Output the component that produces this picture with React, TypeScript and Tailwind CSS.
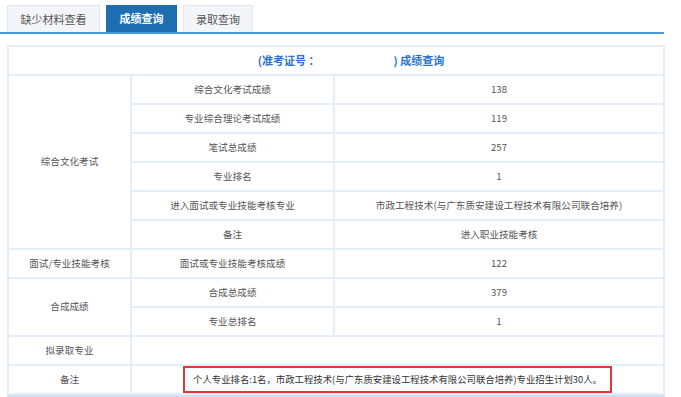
import React from "react";

const font = { fontFamily: '"Noto Sans CJK SC", "Liberation Sans", sans-serif' };

const tabs = ["缺少材料查看", "成绩查询", "录取查询"];

const Cell = ({
  children,
  rowSpan,
  colSpan,
}: {
  children?: React.ReactNode;
  rowSpan?: number;
  colSpan?: number;
}) => (
  <td
    rowSpan={rowSpan}
    colSpan={colSpan}
    className="border-2 border-[#e4eefa] text-center align-middle text-[9.6px] text-[#555] leading-none p-0"
  >
    {children}
  </td>
);

const App = () => {
  return (
    <div className="w-[681px] h-[397px] bg-white overflow-hidden" style={font}>
      {/* tabs */}
      <div className="flex items-end gap-[6px] pl-[7px] pt-[5px] w-[664px] border-b-2 border-[#4b9ad6]">
        {tabs.map((t, i) =>
          i === 1 ? (
            <div
              key={t}
              className="h-[27px] w-[71px] flex items-center justify-center bg-[#1e6fb1] text-white text-[11px] font-bold"
            >
              {t}
            </div>
          ) : (
            <div
              key={t}
              className={`h-[27px] ${i === 0 ? "w-[93px]" : "w-[70px]"} flex items-center justify-center bg-[#f3f5f8] border border-b-0 border-[#dfe7f0] text-[#555] text-[11px]`}
            >
              {t}
            </div>
          )
        )}
      </div>

      {/* score table */}
      <div className="mt-[11px] ml-[7px] w-[658px] border-b-[3px] border-[#cfe0f3]">
        <table className="w-full border-collapse table-fixed">
          <colgroup>
            <col className="w-[123px]" />
            <col className="w-[203px]" />
            <col />
          </colgroup>
          <tbody>
            <tr className="h-[29px]">
              <td
                colSpan={3}
                className="border-2 border-[#e4eefa] text-center text-[11px] font-bold text-[#2a72d0] p-0"
              >
                <span className="pl-[30px]">(准考证号 ：</span>
                <span className="inline-block w-[74px]" />
                <span>) 成绩查询</span>
              </td>
            </tr>
            <tr className="h-[29px]">
              <Cell rowSpan={6}>综合文化考试</Cell>
              <Cell>综合文化考试成绩</Cell>
              <Cell>138</Cell>
            </tr>
            <tr className="h-[29px]">
              <Cell>专业综合理论考试成绩</Cell>
              <Cell>119</Cell>
            </tr>
            <tr className="h-[29px]">
              <Cell>笔试总成绩</Cell>
              <Cell>257</Cell>
            </tr>
            <tr className="h-[29px]">
              <Cell>专业排名</Cell>
              <Cell>1</Cell>
            </tr>
            <tr className="h-[29px]">
              <Cell>进入面试或专业技能考核专业</Cell>
              <Cell>市政工程技术(与广东质安建设工程技术有限公司联合培养)</Cell>
            </tr>
            <tr className="h-[29px]">
              <Cell>备注</Cell>
              <Cell>进入职业技能考核</Cell>
            </tr>
            <tr className="h-[29px]">
              <Cell>面试/专业技能考核</Cell>
              <Cell>面试或专业技能考核成绩</Cell>
              <Cell>122</Cell>
            </tr>
            <tr className="h-[29px]">
              <Cell rowSpan={2}>合成成绩</Cell>
              <Cell>合成总成绩</Cell>
              <Cell>379</Cell>
            </tr>
            <tr className="h-[29px]">
              <Cell>专业总排名</Cell>
              <Cell>1</Cell>
            </tr>
            <tr className="h-[29px]">
              <Cell>拟录取专业</Cell>
              <Cell colSpan={2} />
            </tr>
            <tr className="h-[29px]">
              <Cell>备注</Cell>
              <Cell colSpan={2}>
                <span className="inline-flex items-center h-[27px] px-[8px] border-2 border-[#e8353a] text-[#333] text-[9.4px]">
                  个人专业排名:1名，市政工程技术(与广东质安建设工程技术有限公司联合培养)专业招生计划30人。
                </span>
              </Cell>
            </tr>
          </tbody>
        </table>
      </div>
    </div>
  );
};

export default App;
